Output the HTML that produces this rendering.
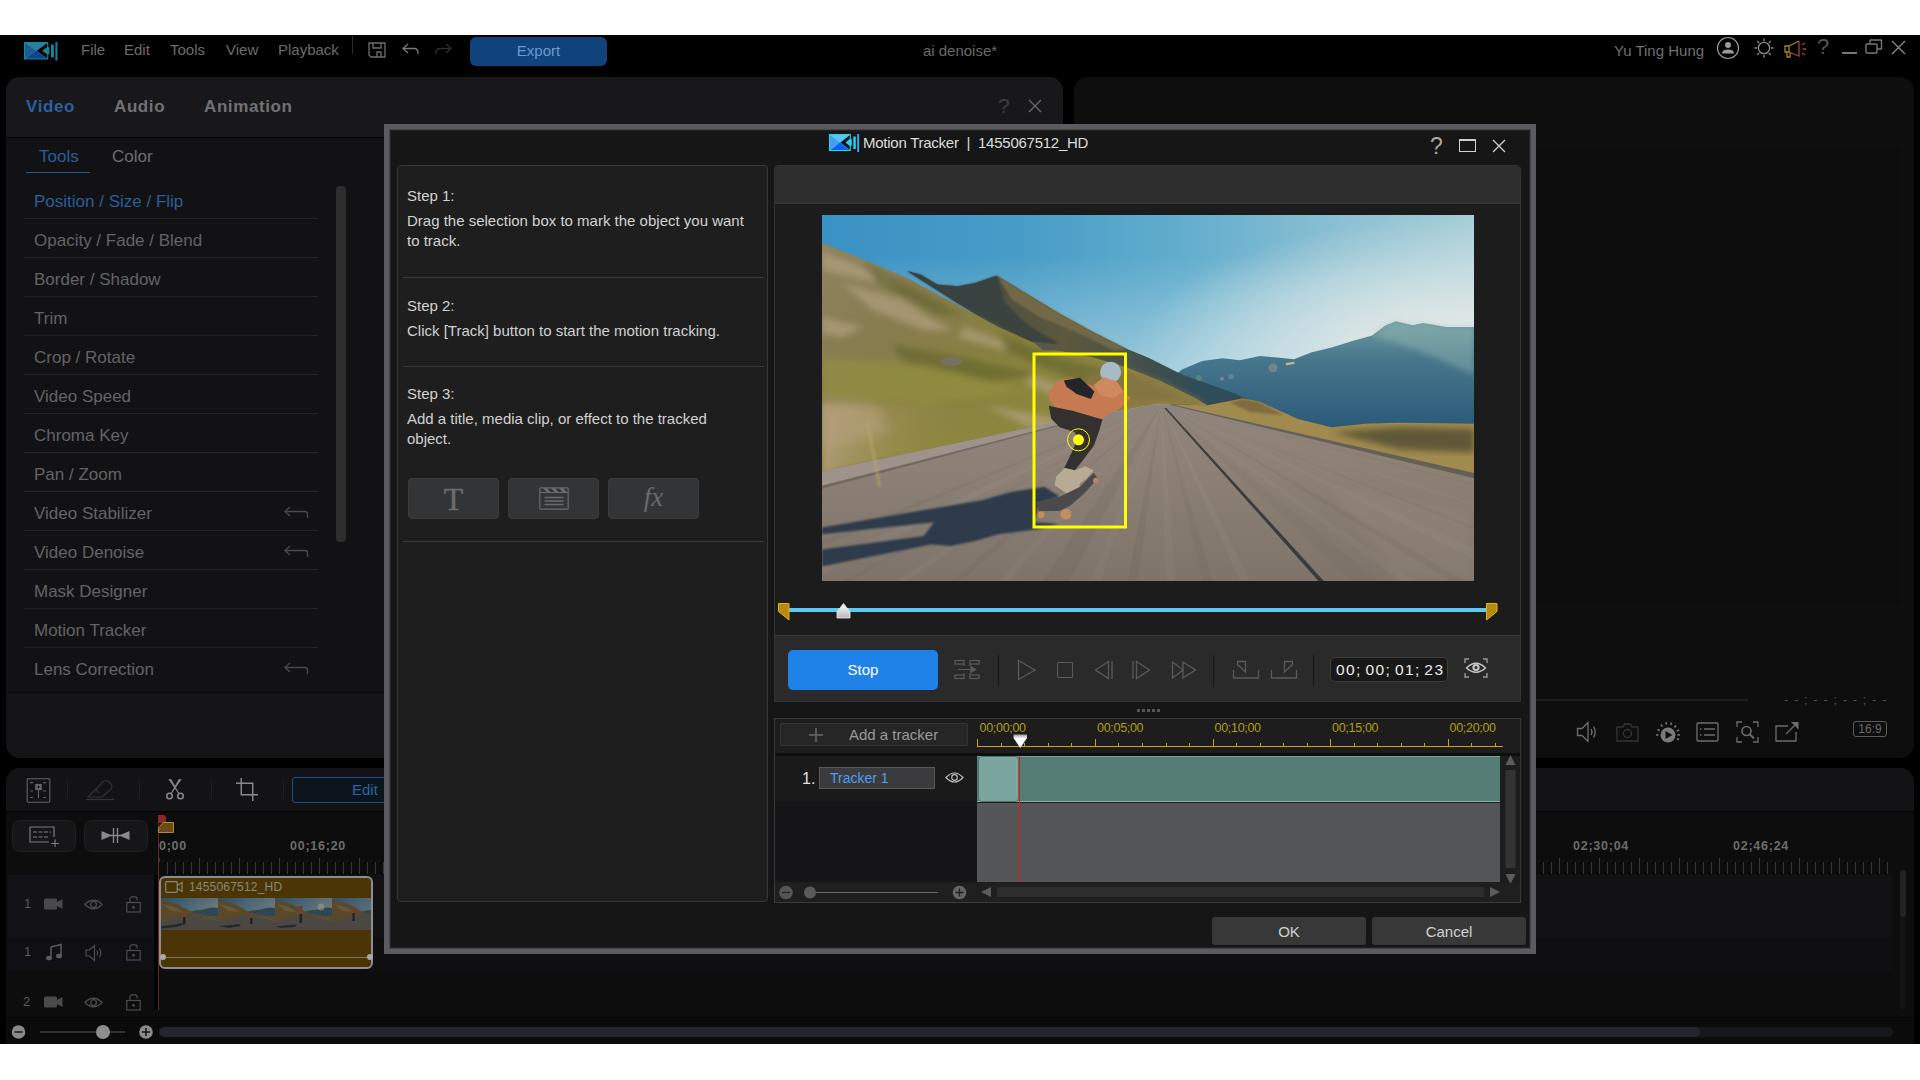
<!DOCTYPE html>
<html lang="en">
<head>
<meta charset="utf-8">
<title>Motion Tracker</title>
<style>
*{box-sizing:border-box;margin:0;padding:0}
html,body{width:1920px;height:1080px;overflow:hidden;background:#fff}
body{font-family:"Liberation Sans",sans-serif;color:#8a8a8a;position:relative}
.abs,.app *{position:absolute}
.app{position:absolute;left:0;top:0;width:1920px;height:1080px;background:linear-gradient(#fff 35px,#000 35px,#000 1044px,#fff 1044px);overflow:hidden}
svg{overflow:visible}
.t{white-space:nowrap;line-height:1}
/* top bar */
.menu{top:42px;font-size:15px;color:#6c6c6c}
/* panels */
.lp{left:6px;top:77px;width:1057px;height:681px;background:#121214;border-radius:14px;overflow:hidden}
.lph{left:0;top:0;width:100%;height:61px;background:#18181b;border-bottom:1px solid #050505}
.pv{left:1074px;top:77px;width:840px;height:681px;background:#0e0e0e;border-radius:14px}
.tl{left:6px;top:768px;width:1908px;height:276px;background:#0d0d0e;border-radius:14px 14px 0 0;overflow:hidden}
.tool{left:18px;width:294px;height:39px;border-bottom:1px solid #26262a;font-size:17px;color:#6e6e70}
.tool span{left:10px;top:11px}
/* dialog */
.dlg{left:384px;top:124px;width:1152px;height:830px;background:#161616;border:5px solid #5c5c60;box-shadow:inset 0 0 0 1px #454545,inset 0 0 0 2px #242424}
</style>
</head>
<body>
<div class="app">
<!--TOPBAR-->
<svg style="left:24px;top:41.500px" width="34.500" height="18.500" viewBox="0 0 31 18" preserveAspectRatio="none">
 <rect x="0" y="0" width="21.800" height="17" fill="#138a98"/>
 <path d="M1 1.500 L11 8.500 L1 15.500Z" fill="#215a92"/><path d="M1.500 1 H20.500 L11 8.500Z" fill="#2a7f9c"/><path d="M1.500 16 H20.500 L11 8.500Z" fill="#0f4390"/>
 <path d="M20.800 1.200 L11.500 8.500 L20.800 15.800 V12 L16.500 8.500 L20.800 5Z" fill="#000"/>
 <path d="M16.800 8.500 L21 5.200 H22.800 V11.800 H21Z" fill="#138a98"/>
 <rect x="24.300" y="2.500" width="2.500" height="12.500" fill="#138a98"/><rect x="28.200" y="0" width="1.900" height="18" fill="#1f7aa0"/>
</svg>
<div class="t menu" style="left:81px">File</div>
<div class="t menu" style="left:124px">Edit</div>
<div class="t menu" style="left:170px">Tools</div>
<div class="t menu" style="left:226px">View</div>
<div class="t menu" style="left:278px">Playback</div>
<div style="left:352px;top:36px;width:1px;height:18px;background:#2c2c2c"></div>
<svg style="left:368px;top:42px" width="18" height="16" viewBox="0 0 18 16" fill="none" stroke="#6f6f6f" stroke-width="1.3">
 <path d="M1 1 H17 V15 H3 L1 13Z"/><path d="M5 1 V6 H13 V1"/><path d="M9 15 V10 H13 V15"/>
</svg>
<svg style="left:402px;top:43px" width="17" height="12" viewBox="0 0 17 12" fill="none" stroke="#7a7a7a" stroke-width="1.3">
 <path d="M6 1 L1 5.5 L6 10"/><path d="M1 5.5 H12 Q16 5.5 16 10 V11"/>
</svg>
<svg style="left:435px;top:43px" width="17" height="12" viewBox="0 0 17 12" fill="none" stroke="#2e2e2e" stroke-width="1.3">
 <path d="M11 1 L16 5.5 L11 10"/><path d="M16 5.5 H5 Q1 5.5 1 10 V11"/>
</svg>
<div style="left:470px;top:37px;width:137px;height:29px;border-radius:6px;background:#10427c"></div>
<div class="t" style="left:470px;top:43px;width:137px;text-align:center;font-size:15px;color:#6c9bd0">Export</div>
<div class="t" style="left:860px;top:43px;width:200px;text-align:center;font-size:15px;color:#6a6a6a">ai denoise*</div>
<div class="t" style="left:1614px;top:43px;font-size:15px;color:#6f6f6f">Yu Ting Hung</div>
<svg style="left:1716px;top:36px" width="24" height="24" viewBox="0 0 24 24" fill="none" stroke="#9a9a9a" stroke-width="1.2">
 <circle cx="12" cy="12" r="10.5"/><circle cx="12" cy="9" r="3" fill="#9a9a9a" stroke="none"/><path d="M6 17.5 Q6 13.5 12 13.5 Q18 13.5 18 17.5 Z" fill="#9a9a9a" stroke="none"/>
</svg>
<svg style="left:1753px;top:37px" width="22" height="22" viewBox="0 0 22 22" fill="none" stroke="#8a8a8a" stroke-width="1.4">
 <circle cx="11" cy="11" r="5.6"/><path d="M11 1.5V4 M11 18V20.5 M1.5 11H4 M18 11H20.5 M4.3 4.3L6.1 6.1 M15.9 15.9L17.7 17.7 M4.3 17.7L6.1 15.9 M15.9 6.1L17.7 4.3"/>
</svg>
<svg style="left:1783px;top:39px" width="26" height="20" viewBox="0 0 26 20" fill="none" stroke-width="1.3">
 <path d="M2 7 H6 V13 H2 Z" stroke="#a8841a"/><path d="M6 7 L16 2" stroke="#a8841a"/><path d="M16 2 V17 L6 13" stroke="#a0452f"/><path d="M4 13 V18 H7 V13.5" stroke="#a8841a"/><path d="M19 6 L22 4 M19.5 10 H23 M19 14 L22 16" stroke="#a0452f"/>
</svg>
<div class="t" style="left:1817px;top:36px;font-size:22px;color:#555">?</div>
<div style="left:1842px;top:52px;width:15px;height:1.5px;background:#777"></div>
<svg style="left:1865px;top:39px" width="18" height="15" viewBox="0 0 18 15" fill="none" stroke="#777" stroke-width="1.4">
 <rect x="1" y="5" width="11" height="9" rx="1"/><path d="M5 5 V1.5 Q5 1 5.5 1 H16 Q16.5 1 16.500 1.5 V9.500 Q16.500 10 16 10 H12"/>
</svg>
<svg style="left:1891px;top:40px" width="15" height="15" viewBox="0 0 15 15" fill="none" stroke="#8a8a8a" stroke-width="1.3"><path d="M1 1 L14 14 M14 1 L1 14"/></svg>

<!--LEFTPANEL-->
<div class="lp">
 <div class="lph"></div>
 <div style="left:0;top:615px;width:100%;height:66px;background:#141416;border-top:1px solid #0c0c0d"></div>
</div>
<div class="t" style="left:26px;top:98px;font-size:17px;font-weight:bold;letter-spacing:.6px;color:#2b60a0">Video</div>
<div class="t" style="left:114px;top:98px;font-size:17px;font-weight:bold;letter-spacing:.6px;color:#727272">Audio</div>
<div class="t" style="left:204px;top:98px;font-size:17px;font-weight:bold;letter-spacing:.6px;color:#727272">Animation</div>
<div class="t" style="left:998px;top:95px;font-size:21px;color:#3f3f3f">?</div>
<svg style="left:1028px;top:99px" width="14" height="14" viewBox="0 0 14 14" fill="none" stroke="#6a6a6a" stroke-width="1.3"><path d="M1 1 L13 13 M13 1 L1 13"/></svg>
<div class="t" style="left:39px;top:148px;font-size:17px;color:#2a5d99">Tools</div>
<div style="left:26px;top:171.500px;width:64px;height:1.500px;background:#24558f"></div>
<div class="t" style="left:112px;top:148px;font-size:17px;color:#6e6e70">Color</div>
<div style="left:336px;top:186px;width:10px;height:356px;border-radius:4px;background:#2d2d2e"></div>
<div class="t" style="left:34px;top:193px;font-size:17px;color:#2a5d99">Position / Size / Flip</div>
<div style="left:24px;top:218px;width:294px;height:1px;background:#252528"></div>
<div class="t" style="left:34px;top:232px;font-size:17px;color:#636365">Opacity / Fade / Blend</div>
<div style="left:24px;top:257px;width:294px;height:1px;background:#252528"></div>
<div class="t" style="left:34px;top:271px;font-size:17px;color:#636365">Border / Shadow</div>
<div style="left:24px;top:296px;width:294px;height:1px;background:#252528"></div>
<div class="t" style="left:34px;top:310px;font-size:17px;color:#636365">Trim</div>
<div style="left:24px;top:335px;width:294px;height:1px;background:#252528"></div>
<div class="t" style="left:34px;top:349px;font-size:17px;color:#636365">Crop / Rotate</div>
<div style="left:24px;top:374px;width:294px;height:1px;background:#252528"></div>
<div class="t" style="left:34px;top:388px;font-size:17px;color:#636365">Video Speed</div>
<div style="left:24px;top:413px;width:294px;height:1px;background:#252528"></div>
<div class="t" style="left:34px;top:427px;font-size:17px;color:#636365">Chroma Key</div>
<div style="left:24px;top:452px;width:294px;height:1px;background:#252528"></div>
<div class="t" style="left:34px;top:466px;font-size:17px;color:#636365">Pan / Zoom</div>
<div style="left:24px;top:491px;width:294px;height:1px;background:#252528"></div>
<div class="t" style="left:34px;top:505px;font-size:17px;color:#636365">Video Stabilizer</div>
<div style="left:24px;top:530px;width:294px;height:1px;background:#252528"></div>
<svg style="left:284px;top:506px" width="25" height="13" viewBox="0 0 25 13" fill="none" stroke="#4a4a4c" stroke-width="1.3"><path d="M6 1 L1 5.5 L6 10"/><path d="M1 5.5 H21 Q23.5 5.5 23.5 8 V12"/></svg>
<div class="t" style="left:34px;top:544px;font-size:17px;color:#636365">Video Denoise</div>
<div style="left:24px;top:569px;width:294px;height:1px;background:#252528"></div>
<svg style="left:284px;top:545px" width="25" height="13" viewBox="0 0 25 13" fill="none" stroke="#4a4a4c" stroke-width="1.3"><path d="M6 1 L1 5.5 L6 10"/><path d="M1 5.5 H21 Q23.5 5.5 23.5 8 V12"/></svg>
<div class="t" style="left:34px;top:583px;font-size:17px;color:#636365">Mask Designer</div>
<div style="left:24px;top:608px;width:294px;height:1px;background:#252528"></div>
<div class="t" style="left:34px;top:622px;font-size:17px;color:#636365">Motion Tracker</div>
<div style="left:24px;top:647px;width:294px;height:1px;background:#252528"></div>
<div class="t" style="left:34px;top:661px;font-size:17px;color:#636365">Lens Correction</div>
<svg style="left:284px;top:662px" width="25" height="13" viewBox="0 0 25 13" fill="none" stroke="#4a4a4c" stroke-width="1.3"><path d="M6 1 L1 5.5 L6 10"/><path d="M1 5.5 H21 Q23.5 5.5 23.5 8 V12"/></svg>

<!--PREVIEW-->
<div class="pv"></div>
<div style="left:1084px;top:147px;width:816px;height:457px;background:#0c0c0c"></div>
<div style="left:1536px;top:699px;width:212px;height:2px;background:#1f1f1f"></div>
<div class="t" style="left:1784px;top:693px;font-size:13px;color:#4e4e4e;letter-spacing:5.700px">--;--;--;--</div>
<svg style="left:1576px;top:721px" width="22" height="22" viewBox="0 0 22 22" fill="none" stroke="#6e6e6e" stroke-width="1.300"><path d="M1.500 7.500 H6 L12 1.500 V20.500 L6 14.500 H1.500Z"/><path d="M15 8 Q17 11 15 14 M17.500 5.500 Q21 11 17.500 16.500"/></svg>
<svg style="left:1616px;top:723px" width="23" height="19" viewBox="0 0 23 19" fill="none" stroke="#353535" stroke-width="1.300"><path d="M1 4 H7 L8.500 1 H14.500 L16 4 H22 V18 H1Z"/><circle cx="11.500" cy="10.500" r="4"/></svg>
<svg style="left:1653px;top:719px" width="30" height="26" viewBox="0 0 30 26"><circle cx="15" cy="16" r="7.500" fill="#7a7a7a"/><path d="M12.500 12 L19.500 16 L12.500 20Z" fill="#0e0e0e"/><path d="M3 16 H5.500 M4.500 10.500 L6.800 11.700 M8 5.500 L9.500 7.600 M13 3 L13.500 5.500 M18.500 3.500 L17.800 6 M23 6.500 L21.500 8.500 M26 11 L23.800 12.200 M27 16 H24.500 M26 20.500 L23.800 19.700" stroke="#7a7a7a" stroke-width="1.500" fill="none"/></svg>
<svg style="left:1696px;top:722px" width="23" height="20" viewBox="0 0 23 20" fill="none" stroke="#6e6e6e" stroke-width="1.300"><rect x="1" y="1" width="21" height="18" rx="1"/><path d="M8 7 H19 M8 13 H19 M4 7 H5.500 M4 13 H5.500"/></svg>
<svg style="left:1736px;top:721px" width="23" height="22" viewBox="0 0 23 22" fill="none" stroke="#6e6e6e" stroke-width="1.300"><path d="M1 6 V1 H6 M17 1 H22 V6 M22 16 V21 H17 M6 21 H1 V16"/><circle cx="10.500" cy="10" r="4.500" stroke-width="1.600"/><path d="M14 13.500 L18 17.500" stroke-width="1.800"/></svg>
<svg style="left:1775px;top:721px" width="25" height="21" viewBox="0 0 25 21" fill="none" stroke="#6e6e6e" stroke-width="1.300"><path d="M13 5 H1 V20 H21 V11"/><path d="M11 13 L22 2"/><path d="M16 1 H23.500 V8.500Z" fill="#6e6e6e" stroke="none"/></svg>
<div style="left:1853px;top:721px;width:34px;height:16px;border:1.300px solid #5a5a5a;border-radius:3px"></div>
<div class="t" style="left:1853px;top:723px;width:34px;text-align:center;font-size:12px;color:#6a6a6a">16:9</div>

<!--TIMELINE-->
<div class="tl"><div style="left:0;top:0;width:100%;height:44px;background:#131315;border-bottom:1px solid #050505"></div>
<div style="left:2px;top:107px;width:146px;height:62px;background:#131317"></div>
<div style="left:2px;top:169px;width:146px;height:34px;background:#101014"></div>
<div style="left:148px;top:107px;width:5px;height:135px;background:#050505"></div>
<div style="left:153px;top:107px;width:1733px;height:62px;background:#121215"></div>
<div style="left:153px;top:169px;width:1733px;height:34px;background:#0f0f12"></div>
<div style="left:0;top:249px;width:100%;height:27px;background:#0b0b0c;border-top:1px solid #050505"></div>
</div>
<svg style="left:26px;top:778px" width="25" height="25" viewBox="0 0 26 27" fill="none" stroke="#636363" stroke-width="1.200"><rect x="0.800" y="0.800" width="24.400" height="25.400" rx="1"/><path d="M4 5 H8 M18 5 H22 M4 14 H8 M18 14 H22 M4 21 H8 M18 21 H22" stroke-dasharray="3 1"/><rect x="10" y="7" width="6" height="5.500" fill="#636363"/><rect x="12" y="8.800" width="2" height="2" fill="#131315" stroke="none"/><path d="M13 13 V22"/></svg>
<div style="left:67px;top:781px;width:1px;height:18px;background:#222"></div>
<svg style="left:85px;top:779px" width="30" height="22" viewBox="0 0 30 22" fill="none" stroke="#333" stroke-width="1.200"><path d="M3 18 L18 3 Q21 0.500 24 3 L26 5 Q28 8 25.500 10.500 L17 18 Z"/><path d="M1 20.500 H29"/><path d="M11 10 L14 14"/></svg>
<div style="left:139px;top:781px;width:1px;height:18px;background:#222"></div>
<svg style="left:165px;top:779px" width="20" height="21" viewBox="0 0 20 21" fill="none" stroke="#8a8a8a" stroke-width="1.500"><path d="M4 0.500 L6 0.500 L13.800 14.500 Z M16 0.500 L14 0.500 L6.200 14.500Z" fill="#8a8a8a" stroke-width=".8"/><circle cx="4.500" cy="17" r="2.800"/><circle cx="15.500" cy="17" r="2.800"/></svg>
<div style="left:211px;top:781px;width:1px;height:18px;background:#222"></div>
<svg style="left:236px;top:778px" width="22" height="23" viewBox="0 0 23 24" fill="none" stroke="#8a8a8a" stroke-width="1.500"><path d="M5.500 0 V17.500 H23 M0 5.500 H17.500 V24"/></svg>
<div style="left:283px;top:781px;width:1px;height:18px;background:#222"></div>
<div style="left:292px;top:777px;width:120px;height:26px;background:#0c141d;border:1.500px solid #1b4f85;border-radius:3px"></div>
<div class="t" style="left:352px;top:781.500px;font-size:15px;color:#2a64a4">Edit</div>
<div style="left:12px;top:820px;width:64px;height:32px;background:#161618;border:1px solid #202022;border-radius:8px"></div>
<div style="left:84px;top:820px;width:64px;height:32px;background:#161618;border:1px solid #202022;border-radius:8px"></div>
<svg style="left:29px;top:826px" width="32" height="21" viewBox="0 0 32 21" fill="none" stroke="#7c7c7c" stroke-width="1.200"><path d="M25 11 V1 H1 V16 H20"/><path d="M4 6 H22 M4 11 H20" stroke-dasharray="4 1.500"/><path d="M22 17.500 H30 M26 13.500 V21"/></svg>
<svg style="left:101px;top:827px" width="29" height="17" viewBox="0 0 29 17"><path d="M0.500 4 L11 8.500 L0.500 13Z M28.500 4 L18 8.500 L28.500 13Z" fill="#8a8a8a"/><path d="M12.500 1 V16 M16.500 1 V16 M9 8.500 H20" stroke="#8a8a8a" stroke-width="1.300"/></svg>
<div style="left:158px;top:816px;width:1px;height:194px;background:#6e2124"></div>
<svg style="left:158px;top:815px" width="18" height="19" viewBox="0 0 18 19"><path d="M0 0 H5 Q8 0 8 3 V8 H0Z" fill="#8a262a"/><path d="M5 7.500 H15.500 V17.500 H0.500 V13Z" fill="#6a4a18" stroke="#b08a30" stroke-width="1"/></svg>
<div class="t" style="left:159px;top:840px;font-size:12.500px;font-weight:bold;letter-spacing:.75px;color:#6c6c6c">0;00</div>
<div class="t" style="left:290px;top:840px;font-size:12.500px;font-weight:bold;letter-spacing:.75px;color:#6c6c6c">00;16;20</div>
<div class="t" style="left:1573px;top:840px;font-size:12.500px;font-weight:bold;letter-spacing:.75px;color:#6c6c6c">02;30;04</div>
<div class="t" style="left:1733px;top:840px;font-size:12.500px;font-weight:bold;letter-spacing:.75px;color:#6c6c6c">02;46;24</div>
<div style="left:166.500px;top:862px;width:1726px;height:12px;background:repeating-linear-gradient(90deg,#36363a 0 1px,transparent 1px 8px)"></div>
<div style="left:158.500px;top:858px;width:1734px;height:4px;background:repeating-linear-gradient(90deg,#36363a 0 1px,transparent 1px 40px)"></div>
<div class="t" style="left:24px;top:897px;font-size:13px;color:#5a5a5a">1</div>
<svg style="left:44px;top:898px" width="19" height="12" viewBox="0 0 19 12"><rect x="0" y="0.5" width="13" height="11" rx="1.500" fill="#4a4a4a"/><path d="M13 4 L18.500 1 V11 L13 8Z" fill="#4a4a4a"/></svg>
<svg style="left:84px;top:898px" width="19" height="13" viewBox="0 0 19 13" fill="none" stroke="#4c4c4c" stroke-width="1.200"><path d="M0.800 6.500 Q9.500 -2 18.200 6.500 Q9.500 15 0.800 6.500Z"/><circle cx="9.500" cy="6.500" r="2.900"/></svg>
<svg style="left:126px;top:896px" width="15" height="18" viewBox="0 0 15 18" fill="none" stroke="#4c4c4c" stroke-width="1.200"><rect x="0.800" y="6.500" width="13.400" height="9.500"/><path d="M4 6.500 V3 Q4 0.800 6.200 0.800 H9 Q11.200 0.800 11.200 3 V4.500"/><circle cx="7.500" cy="11.300" r="1.400" fill="#4c4c4c" stroke="none"/></svg>

<div class="t" style="left:24px;top:945px;font-size:13px;color:#5a5a5a">1</div>
<svg style="left:46px;top:944px" width="16" height="17" viewBox="0 0 16 17"><path d="M5 3 L15 0.500 V12 M5 3 V14" stroke="#5a5a5a" stroke-width="1.500" fill="none"/><ellipse cx="3" cy="14" rx="3" ry="2.300" fill="#5a5a5a"/><ellipse cx="13" cy="12" rx="3" ry="2.300" fill="#5a5a5a"/></svg>
<svg style="left:85px;top:944px" width="18" height="18" viewBox="0 0 18 18" fill="none" stroke="#4c4c4c" stroke-width="1.200"><path d="M1 6 H4.500 L9.500 1.500 V16.500 L4.500 12 H1Z"/><path d="M12 6.500 Q13.500 9 12 11.500 M14.500 4.500 Q17 9 14.500 13.500"/></svg>
<svg style="left:126px;top:944px" width="15" height="18" viewBox="0 0 15 18" fill="none" stroke="#4c4c4c" stroke-width="1.200"><rect x="0.800" y="6.500" width="13.400" height="9.500"/><path d="M4 6.500 V3 Q4 0.800 6.200 0.800 H9 Q11.200 0.800 11.200 3 V4.500"/><circle cx="7.500" cy="11.300" r="1.400" fill="#4c4c4c" stroke="none"/></svg>

<div class="t" style="left:23px;top:995px;font-size:13px;color:#5a5a5a">2</div>
<svg style="left:44px;top:996px" width="19" height="12" viewBox="0 0 19 12"><rect x="0" y="0.5" width="13" height="11" rx="1.500" fill="#4a4a4a"/><path d="M13 4 L18.500 1 V11 L13 8Z" fill="#4a4a4a"/></svg>
<svg style="left:84px;top:996px" width="19" height="13" viewBox="0 0 19 13" fill="none" stroke="#4c4c4c" stroke-width="1.200"><path d="M0.800 6.500 Q9.500 -2 18.200 6.500 Q9.500 15 0.800 6.500Z"/><circle cx="9.500" cy="6.500" r="2.900"/></svg>
<svg style="left:126px;top:994px" width="15" height="18" viewBox="0 0 15 18" fill="none" stroke="#4c4c4c" stroke-width="1.200"><rect x="0.800" y="6.500" width="13.400" height="9.500"/><path d="M4 6.500 V3 Q4 0.800 6.200 0.800 H9 Q11.200 0.800 11.200 3 V4.500"/><circle cx="7.500" cy="11.300" r="1.400" fill="#4c4c4c" stroke="none"/></svg>

<!-- clip -->
<div style="left:159px;top:876px;width:214px;height:93px;background:#4b3506;border:2px solid #8e8e8e;border-radius:6px"></div>
<svg style="left:165px;top:881px" width="18" height="12" viewBox="0 0 18 12" fill="none" stroke="#8a8574" stroke-width="1.200"><rect x="0.700" y="0.700" width="11.500" height="10.600" rx="1"/><path d="M12.200 4.500 L17 1.500 V10.500 L12.200 7.500"/></svg>
<div class="t" style="left:189px;top:881px;font-size:12px;color:#8a8678;letter-spacing:.2px">1455067512_HD</div>
<svg style="left:161px;top:898px;overflow:hidden" width="210" height="32" viewBox="0 0 210 32">
<defs><linearGradient id="tsky" x1="0" y1="0" x2="1" y2="0.600"><stop offset="0" stop-color="#2f6386"/><stop offset="1" stop-color="#8f9c9c"/></linearGradient>
</defs>
<g transform="translate(0 0)"><rect width="57" height="32" fill="url(#tsky)"/><path d="M28 14 L34 12.500 L40 12 L48 10 L53 9.500 L57 10 V19 H28Z" fill="#35566a"/><path d="M0 1 L8 3.500 L16 6 L24 10 L31 14.500 L37 17 L0 23Z" fill="#6b5833"/><path d="M2 6 L14 9 L22 14 L10 13Z" fill="#8a7650" opacity=".6"/><path d="M0 23 L20 18.500 L30 16.500 L57 22.500 V32 H0Z" fill="#5a5654"/><path d="M30 16.500 L38 16 L48 18 L57 18 V22.500Z" fill="#6a5a36"/></g><g transform="translate(57 0)"><rect width="57" height="32" fill="url(#tsky)"/><path d="M28 14 L34 12.500 L40 12 L48 10 L53 9.500 L57 10 V19 H28Z" fill="#35566a"/><path d="M0 1 L8 3.500 L16 6 L24 10 L31 14.500 L37 17 L0 23Z" fill="#6b5833"/><path d="M2 6 L14 9 L22 14 L10 13Z" fill="#8a7650" opacity=".6"/><path d="M0 23 L20 18.500 L30 16.500 L57 22.500 V32 H0Z" fill="#5a5654"/><path d="M30 16.500 L38 16 L48 18 L57 18 V22.500Z" fill="#6a5a36"/></g><g transform="translate(114 0)"><rect width="57" height="32" fill="url(#tsky)"/><path d="M28 14 L34 12.500 L40 12 L48 10 L53 9.500 L57 10 V19 H28Z" fill="#35566a"/><path d="M0 1 L8 3.500 L16 6 L24 10 L31 14.500 L37 17 L0 23Z" fill="#6b5833"/><path d="M2 6 L14 9 L22 14 L10 13Z" fill="#8a7650" opacity=".6"/><path d="M0 23 L20 18.500 L30 16.500 L57 22.500 V32 H0Z" fill="#5a5654"/><path d="M30 16.500 L38 16 L48 18 L57 18 V22.500Z" fill="#6a5a36"/></g><g transform="translate(171 0)"><rect width="57" height="32" fill="url(#tsky)"/><path d="M28 14 L34 12.500 L40 12 L48 10 L53 9.500 L57 10 V19 H28Z" fill="#35566a"/><path d="M0 1 L8 3.500 L16 6 L24 10 L31 14.500 L37 17 L0 23Z" fill="#6b5833"/><path d="M2 6 L14 9 L22 14 L10 13Z" fill="#8a7650" opacity=".6"/><path d="M0 23 L20 18.500 L30 16.500 L57 22.500 V32 H0Z" fill="#5a5654"/><path d="M30 16.500 L38 16 L48 18 L57 18 V22.500Z" fill="#6a5a36"/></g>
<path d="M0 28 L14 26.500 L20 25 L24 26 L16 29 L0 30.500Z M57 28 L70 27 L78 26 L80 28 L68 30Z M114 28.500 L128 27 L136 26.500 L134 29 L120 30Z" fill="#2a2f3a"/>
<g fill="#8a4e34"><rect x="21" y="14" width="4" height="5"/><rect x="88" y="15" width="4" height="5"/><rect x="137" y="8" width="4.500" height="8"/><rect x="190" y="8" width="4" height="7"/></g>
<g fill="#25262a"><rect x="22" y="19" width="2.500" height="7"/><rect x="89" y="20" width="2.500" height="6"/><rect x="138.500" y="16" width="2.500" height="9"/><rect x="191.500" y="15" width="2.200" height="8"/></g>
<circle cx="160" cy="9" r="3.500" fill="#c8c4b4" opacity=".55"/><rect width="210" height="32" fill="#1a1408" opacity=".22"/>
</svg>

<div style="left:162px;top:957px;width:208px;height:1px;background:#7d755f"></div>
<div style="left:160px;top:954px;width:6px;height:6px;border-radius:3px;background:#a8a8a8"></div>
<div style="left:367px;top:954px;width:6px;height:6px;border-radius:3px;background:#a8a8a8"></div>
<!-- bottom bar -->
<svg style="left:10px;top:1024px" width="146" height="16" viewBox="0 0 146 16"><circle cx="8.500" cy="8" r="6.800" fill="#8a8a8a"/><path d="M4.500 8 H12.500" stroke="#111" stroke-width="1.400"/><path d="M30 8 H115" stroke="#5a5a5a" stroke-width="1"/><circle cx="93" cy="8" r="7" fill="#8e8e8e"/><circle cx="136" cy="8" r="6.800" fill="#8a8a8a"/><path d="M132 8 H140 M136 4 V12" stroke="#111" stroke-width="1.400"/></svg>
<div style="left:159px;top:1027px;width:1734px;height:10px;border-radius:5px;background:#17181b"></div>
<div style="left:159px;top:1027px;width:1541px;height:10px;border-radius:5px;background:#23252b"></div>
<div style="left:1900px;top:870px;width:6px;height:140px;border-radius:3px;background:#131314"></div>
<div style="left:1900px;top:870px;width:6px;height:47px;border-radius:3px;background:#222224"></div>

<!--DIALOG-->
<div class="dlg"></div>
<svg style="left:829px;top:134px" width="31" height="18" viewBox="0 0 31 18">
 <rect x="0" y="0" width="21.800" height="17" fill="#22d2ee"/>
 <path d="M1 1.500 L11 8.500 L1 15.500Z" fill="#4a9af0"/><path d="M1.500 1 H20.500 L11 8.500Z" fill="#5cc4f2"/><path d="M1.500 16 H20.500 L11 8.500Z" fill="#0a62ee"/>
 <path d="M20.800 1.200 L11.500 8.500 L20.800 15.800 V12 L16.500 8.500 L20.800 5Z" fill="#141414"/>
 <path d="M16.800 8.500 L21 5.200 H22.800 V11.800 H21Z" fill="#22d2ee"/>
 <rect x="24.300" y="2.500" width="2.500" height="12.500" fill="#22d2ee"/><rect x="28.200" y="0" width="1.900" height="18" fill="#2aaef0"/>
</svg>
<div class="t" style="left:863px;top:135px;font-size:15px;color:#dcdcdc;letter-spacing:-.25px">Motion Tracker&nbsp; |&nbsp; 1455067512_HD</div>
<div class="t" style="left:1430px;top:134.500px;font-size:23px;color:#aaa6a0">?</div>
<div style="left:1459px;top:139px;width:17px;height:13px;border:1.500px solid #d0d0d0;border-top-width:2px"></div>
<svg style="left:1492px;top:139px" width="14" height="14" viewBox="0 0 14 14" fill="none" stroke="#cfcfcf" stroke-width="1.300"><path d="M1 1 L13 13 M13 1 L1 13"/></svg>
<!-- steps panel -->
<div style="left:397px;top:165px;width:371px;height:737px;background:#1e1e1e;border:1px solid #383838;border-radius:4px"></div>
<div class="t" style="left:407px;top:188px;color:#d2d2d2;font-size:15px">Step 1:</div>
<div class="t" style="left:407px;top:213px;color:#d2d2d2;font-size:15px">Drag the selection box to mark the object you want</div>
<div class="t" style="left:407px;top:233px;color:#d2d2d2;font-size:15px">to track.</div>
<div style="left:403px;top:277px;width:361px;height:1px;background:#3a3a3a"></div>
<div class="t" style="left:407px;top:298px;color:#d2d2d2;font-size:15px">Step 2:</div>
<div class="t" style="left:407px;top:323px;color:#d2d2d2;font-size:15px">Click [Track] button to start the motion tracking.</div>
<div style="left:403px;top:366px;width:361px;height:1px;background:#3a3a3a"></div>
<div class="t" style="left:407px;top:386px;color:#d2d2d2;font-size:15px">Step 3:</div>
<div class="t" style="left:407px;top:411px;color:#d2d2d2;font-size:15px">Add a title, media clip, or effect to the tracked</div>
<div class="t" style="left:407px;top:431px;color:#d2d2d2;font-size:15px">object.</div>
<div style="left:408px;top:478px;width:91px;height:41px;background:#333436;border:1px solid #3b3c3e;border-radius:4px"></div>
<div style="left:508px;top:478px;width:91px;height:41px;background:#333436;border:1px solid #3b3c3e;border-radius:4px"></div>
<div style="left:608px;top:478px;width:91px;height:41px;background:#333436;border:1px solid #3b3c3e;border-radius:4px"></div>
<div class="t" style="left:408px;top:483px;width:91px;text-align:center;font-family:'Liberation Serif',serif;font-size:32px;color:#6c6c6c;-webkit-text-stroke:.4px #6c6c6c">T</div>
<svg style="left:539px;top:487px" width="30" height="23" viewBox="0 0 30 23" fill="none" stroke="#6a6a6a" stroke-width="1.200">
 <rect x="0.800" y="0.800" width="28.400" height="21.400" rx="1"/><path d="M0.800 5.500 H29.200"/><path d="M4 1 L8 5.500 H12 L8 1Z M12 1 L16 5.500 H20 L16 1Z M20 1 L24 5.500 H28 L24 1Z" fill="#6a6a6a" stroke="none"/><path d="M5.500 10.500 H24.500 M5.500 14 H24.500 M5.500 17.500 H24.500" stroke-width="1.400"/>
</svg>
<div class="t" style="left:608px;top:482px;width:91px;text-align:center;font-family:'Liberation Serif',serif;font-style:italic;font-size:27px;color:#6a6a6a;padding-top:2px">fx</div>
<div style="left:403px;top:541px;width:361px;height:1px;background:#3a3a3a"></div>
<!-- viewer panel -->
<div style="left:774px;top:165px;width:747px;height:537px;background:#1c1c1c;border:1px solid #333;border-radius:4px 4px 0 0"></div>
<div style="left:775px;top:166px;width:745px;height:38px;background:#2d2d2d;border-bottom:1px solid #3a3a3a;border-radius:4px 4px 0 0"></div>
<div style="left:775px;top:635px;width:745px;height:66px;background:#2a2a2a;border-top:1px solid #3a3a3a"></div>
<svg style="left:822px;top:215px;overflow:hidden" width="652" height="366" viewBox="0 0 652 366">
<defs>
 <linearGradient id="sky" x1="0" y1="0" x2="1" y2="0"><stop offset="0" stop-color="#3a91c4"/><stop offset="0.30" stop-color="#479cc7"/><stop offset="0.55" stop-color="#62adcd"/><stop offset="0.8" stop-color="#8cc0d2"/><stop offset="1" stop-color="#a6cdd7"/></linearGradient>
 <radialGradient id="glow" gradientUnits="userSpaceOnUse" cx="640" cy="140" r="330" gradientTransform="translate(640 140) scale(1 .42) translate(-640 -140)"><stop offset="0" stop-color="#e9e8e3" stop-opacity="1"/><stop offset="0.3" stop-color="#e4e7e4" stop-opacity=".9"/><stop offset="0.65" stop-color="#dce7e8" stop-opacity=".5"/><stop offset="1" stop-color="#dce7e8" stop-opacity="0"/></radialGradient>
 <linearGradient id="haze" x1="0" y1="0" x2="0" y2="1"><stop offset="0" stop-color="#d8e8ea" stop-opacity="0"/><stop offset="1" stop-color="#d8e8ea" stop-opacity=".7"/></linearGradient>
 <linearGradient id="hill" gradientUnits="userSpaceOnUse" x1="0" y1="80" x2="500" y2="760"><stop offset="0" stop-color="#8f8460"/><stop offset="0.35" stop-color="#877c50"/><stop offset="0.65" stop-color="#878040"/><stop offset="1" stop-color="#8d883e"/></linearGradient>
 <linearGradient id="mtn" gradientUnits="userSpaceOnUse" x1="250" y1="200" x2="1100" y2="500"><stop offset="0" stop-color="#3c4846"/><stop offset="0.3" stop-color="#4f5140"/><stop offset="0.55" stop-color="#5d583e"/><stop offset="0.8" stop-color="#45504a"/><stop offset="1" stop-color="#2f4c58"/></linearGradient>
 <linearGradient id="far" gradientUnits="userSpaceOnUse" x1="0" y1="320" x2="0" y2="620"><stop offset="0" stop-color="#6a989e"/><stop offset="0.35" stop-color="#47778c"/><stop offset="1" stop-color="#2b5b79"/></linearGradient>
 <linearGradient id="road" gradientUnits="userSpaceOnUse" x1="0" y1="556" x2="0" y2="1078"><stop offset="0" stop-color="#90857c"/><stop offset="0.35" stop-color="#8d8176"/><stop offset="1" stop-color="#7e746b"/></linearGradient>
 <linearGradient id="sand" gradientUnits="userSpaceOnUse" x1="0" y1="0" x2="520" y2="0"><stop offset="0" stop-color="#b39f7c" stop-opacity=".85"/><stop offset="0.5" stop-color="#a39456" stop-opacity=".35"/><stop offset="1" stop-color="#8f8a3f" stop-opacity="0"/></linearGradient>
 <clipPath id="roadclip"><path d="M0 806 L700 620 L990 556 L1030 560 L1920 775 V1078 H0Z"/></clipPath>
 <filter id="b1"><feGaussianBlur stdDeviation="3"/></filter>
 <filter id="b3"><feGaussianBlur stdDeviation="9"/></filter>
 <filter id="b6"><feGaussianBlur stdDeviation="18"/></filter>
</defs>
<rect width="652" height="366" fill="url(#sky)"/>
<rect width="652" height="366" fill="url(#glow)"/>
<rect x="0" y="40" width="652" height="160" fill="url(#haze)"/>
<g transform="scale(0.33958)">
 <!-- far blue mountains -->
 <path d="M1030 480 L1060 455 L1120 430 L1180 422 L1230 428 L1290 415 L1340 420 L1390 425 L1440 405 L1500 390 L1560 372 L1620 355 L1660 325 L1690 313 L1740 325 L1770 318 L1840 330 L1920 330 V660 H1030Z" fill="url(#far)"/>
 <path d="M1620 355 L1660 325 L1690 313 L1740 325 L1770 318 L1840 330 L1920 330 V470 L1760 400Z" fill="#9fbfb6" opacity=".4" filter="url(#b3)"/>
 <!-- dark mid mountain -->
 <path d="M250 165 L290 175 L340 205 L400 210 L450 200 L515 178 L600 230 L700 290 L800 345 L900 395 L960 420 L1060 470 L1200 520 L1300 560 L1400 600 L1130 600 L620 400Z" fill="url(#mtn)"/>
 <path d="M515 178 L600 230 L700 290 L800 345 L900 395 L860 400 L760 350 L640 300 L560 250Z" fill="#7a6e48" opacity=".8" filter="url(#b1)"/>
 <path d="M250 165 L290 175 L340 205 L400 210 L450 200 L515 178 L540 260 L600 320 L700 380 L620 378 L400 262Z" fill="#34413f" opacity=".8" filter="url(#b1)"/>
 <!-- sunlit front hill + grass -->
 <path d="M0 82 L120 130 L250 185 L400 265 L520 330 L620 375 L700 400 L800 420 L900 450 L1000 490 L1100 540 L1135 560 L990 556 L690 610 L0 760Z" fill="url(#hill)"/>
 <g filter="url(#b3)">
  <path d="M60 200 L240 250 L330 310 L390 340 L300 340 L150 280Z M420 330 L560 380 L540 400 L400 360Z M0 300 L120 330 L60 360 L0 350Z M620 470 L800 540 L760 560 L600 500Z M0 110 L110 150 L230 215 L120 190 L0 160Z M480 560 L700 600 L780 660 L640 640Z" fill="#b3a382" opacity=".65"/>
  <path d="M120 140 L300 230 L420 300 L330 290 L160 200Z M520 350 L700 420 L900 470 L1050 540 L900 540 L700 470 L540 400Z M200 380 L420 420 L640 470 L500 490 L250 440Z" fill="#5f5e2c" opacity=".55"/>
  <path d="M0 420 L300 440 L600 520 L300 560 L0 540Z" fill="#98933c" opacity=".5"/>
 </g>
 <path d="M860 440 L1000 490 L1100 540 L1135 560 L990 556 L880 574 L760 540 L780 470Z" fill="#8a7446" opacity=".75" filter="url(#b3)"/>
 <path d="M0 560 L520 560 L690 610 L0 760Z" fill="url(#sand)" filter="url(#b3)"/>
 <path d="M0 540 L160 560 L200 640 L0 700Z" fill="#b6a07e" opacity=".6" filter="url(#b6)"/>
 <ellipse cx="380" cy="432" rx="32" ry="13" fill="#77715f"/>
 <path d="M620 372 L680 380 L720 400 L650 398Z" fill="#5a564a"/>
 <!-- right golden hill -->
 <path d="M1135 560 L1200 548 L1240 540 L1290 550 L1400 600 L1500 625 L1600 615 L1700 612 L1920 615 V765 L1030 558Z" fill="#a08a4e"/>
 <path d="M1500 640 L1700 625 L1920 630 V700 L1700 690Z" fill="#4c4a30" opacity=".75" filter="url(#b3)"/>
 <path d="M1200 552 L1240 542 L1290 552 L1360 590 L1260 580Z" fill="#6a5a38" opacity=".6" filter="url(#b1)"/>
 <!-- road -->
 <path d="M0 755 L690 610 L990 556 L1030 558 L1920 760 V1078 H0Z" fill="url(#road)"/>
 <path d="M1030 558 L1920 760 V775 L1030 560Z" fill="#5e5a50" opacity=".85"/>
 <path d="M1008 568 L1014 568 L1478 1078 L1462 1078Z" fill="#3c3b3b"/>
 <path d="M0 755 L690 610 L700 617 L0 797Z" fill="#9e928b"/>
 <path d="M0 797 L700 617 L702 620 L0 806Z" fill="#66605a" opacity=".7"/>
 <path d="M1500 800 L1920 880 V1078 H1700Z" fill="#978a7c" opacity=".35" filter="url(#b6)"/>
 <g clip-path="url(#roadclip)"><path d="M1000 557 L-300 1078 L-240 1078Z" fill="#000" opacity="0.030"/><path d="M1000 557 L-120 1078 L-40 1078Z" fill="#fff" opacity="0.035"/><path d="M1000 557 L60 1078 L90 1078Z" fill="#000" opacity="0.025"/><path d="M1000 557 L220 1078 L250 1078Z" fill="#fff" opacity="0.030"/><path d="M1000 557 L380 1078 L410 1078Z" fill="#000" opacity="0.030"/><path d="M1000 557 L520 1078 L550 1078Z" fill="#fff" opacity="0.025"/><path d="M1000 557 L650 1078 L730 1078Z" fill="#000" opacity="0.040"/><path d="M1000 557 L790 1078 L820 1078Z" fill="#fff" opacity="0.025"/><path d="M1000 557 L900 1078 L930 1078Z" fill="#000" opacity="0.040"/><path d="M1000 557 L1010 1078 L1040 1078Z" fill="#fff" opacity="0.035"/><path d="M1000 557 L1120 1078 L1150 1078Z" fill="#000" opacity="0.030"/><path d="M1000 557 L1230 1078 L1260 1078Z" fill="#fff" opacity="0.035"/><path d="M1000 557 L1560 1078 L1640 1078Z" fill="#000" opacity="0.025"/><path d="M1000 557 L1700 1078 L1745 1078Z" fill="#fff" opacity="0.025"/><path d="M1000 557 L1850 1078 L1895 1078Z" fill="#000" opacity="0.035"/><path d="M1000 557 L2050 1078 L2130 1078Z" fill="#fff" opacity="0.025"/><path d="M1000 557 L2300 1078 L2330 1078Z" fill="#000" opacity="0.035"/><path d="M1000 557 L2600 1078 L2645 1078Z" fill="#fff" opacity="0.025"/><path d="M1000 557 L3000 1078 L3045 1078Z" fill="#000" opacity="0.035"/></g>
 <!-- shadows -->
 <g fill="#2f3a4b" filter="url(#b1)">
  <path d="M0 920 L400 852 L470 840 L560 815 L655 800 L700 830 L640 848 L625 905 L700 910 L640 925 L520 940 L450 960 L380 975 L320 970 L0 1035 V985 L300 945 L330 905 L0 940Z"/>
 </g>
 <!-- skater -->
 <circle cx="850" cy="463" r="31" fill="#a7bbc5"/>
 <path d="M672 520 L690 488 L740 480 L800 505 L828 478 L870 492 L890 520 L908 540 L880 568 L850 582 L825 602 L790 592 L740 577 L690 567 L668 545Z" fill="#c77a52"/>
 <path d="M800 500 L830 478 L870 492 L885 520 L860 540 L820 530Z" fill="#d39068" opacity=".7"/>
 <path d="M712 487 L760 479 L802 520 L792 542 L750 527 L720 506Z" fill="#23252b"/>
 <path d="M668 562 L690 567 L740 577 L790 592 L826 602 L815 640 L800 680 L770 720 L745 752 L713 746 L735 700 L752 660 L745 640 L700 625 L675 600Z" fill="#33302f"/>
 <path d="M690 770 L715 745 L745 752 L775 740 L800 752 L780 775 L760 790 L755 815 L720 820 L685 795Z" fill="#b7ab95"/>
 <path d="M630 845 L700 830 L760 800 L800 760 L812 776 L770 822 L730 857 L700 872 L640 872Z" fill="#4a4a4c"/>
 <circle cx="645" cy="883" r="10" fill="#c58c62"/><circle cx="718" cy="881" r="16" fill="#c58c62"/><circle cx="806" cy="782" r="8" fill="#b98560"/>
 <!-- lens flares -->
 <circle cx="1328" cy="450" r="13" fill="#b59a86" opacity=".45"/>
 <path d="M1365 436 L1390 432 L1392 438 L1367 443Z" fill="#e8c090" opacity=".8"/>
 <circle cx="1110" cy="480" r="9" fill="#6fb07a" opacity=".35"/><circle cx="1178" cy="482" r="6" fill="#c0a080" opacity=".45"/><circle cx="1205" cy="476" r="8" fill="#8ab0b0" opacity=".35"/>
 <path d="M128 610 L140 612 L175 800 L165 800Z" fill="#b9a86a" opacity=".5" filter="url(#b1)"/>
</g>
<rect x="212" y="139" width="91.500" height="173" fill="none" stroke="#ffff00" stroke-width="3"/>
<circle cx="256.500" cy="224.800" r="11" fill="none" stroke="#ffff00" stroke-width="1"/>
<circle cx="256.500" cy="224.800" r="5.500" fill="#ffff00"/>
</svg>

<!--VIEWCTL-->
<div style="left:788px;top:608px;width:699px;height:4px;background:#5fc9f2"></div>
<svg style="left:778px;top:603px" width="12" height="18" viewBox="0 0 12 18"><path d="M0.5 0.5 H11 V17 L0.5 8.500Z" fill="#b8890f" stroke="#e0b416" stroke-width="1"/></svg>
<svg style="left:1486px;top:603px" width="12" height="18" viewBox="0 0 12 18"><path d="M0.5 0.5 H11 V8.500 L0.5 17Z" fill="#b8890f" stroke="#e0b416" stroke-width="1"/></svg>
<svg style="left:836px;top:603px" width="15" height="16" viewBox="0 0 15 16"><defs><linearGradient id="th" x1="0" y1="0" x2="0" y2="1"><stop offset="0" stop-color="#fff"/><stop offset="1" stop-color="#b8b8b8"/></linearGradient></defs><path d="M7.500 0.5 L14 9 V15 H1 V9Z" fill="url(#th)" stroke="#eee" stroke-width=".8"/></svg>
<div style="left:788px;top:650px;width:150px;height:40px;border-radius:5px;background:#1e82e8"></div>
<div class="t" style="left:788px;top:662px;width:150px;text-align:center;font-size:15px;color:#fff">Stop</div>
<svg style="left:954px;top:659px" width="26" height="21" viewBox="0 0 26 21" fill="none" stroke="#5a5a5a" stroke-width="1.2">
 <rect x="1" y="1.500" width="9" height="3.500"/><rect x="16" y="1.500" width="9" height="3.500"/><rect x="1" y="16" width="9" height="3.500"/><rect x="16" y="16" width="9" height="3.500"/>
 <path d="M10 5 V7 M16 5 V7 M10 16 V14 M16 14 V16"/><path d="M4 10.500 H21 M17 7.500 L21.500 10.500 L17 13.500Z" fill="#5a5a5a"/>
</svg>
<div style="left:998px;top:655px;width:1px;height:32px;background:#161616"></div>
<svg style="left:1017px;top:659px" width="20" height="22" viewBox="0 0 20 22" fill="none" stroke="#5a5a5a" stroke-width="1.3"><path d="M1.500 1.500 L18 11 L1.500 20.500Z"/></svg>
<div style="left:1057px;top:662px;width:16px;height:16px;border:1.500px solid #5a5a5a;border-radius:1px"></div>
<svg style="left:1094px;top:660px" width="20" height="20" viewBox="0 0 20 20" fill="none" stroke="#5a5a5a" stroke-width="1.3"><path d="M14.500 1.500 L1.500 10 L14.500 18.500Z M18 1 V19"/></svg>
<svg style="left:1131px;top:660px" width="20" height="20" viewBox="0 0 20 20" fill="none" stroke="#5a5a5a" stroke-width="1.3"><path d="M5.500 1.500 L18.500 10 L5.500 18.500Z M2 1 V19"/></svg>
<svg style="left:1171px;top:660px" width="26" height="20" viewBox="0 0 26 20" fill="none" stroke="#5a5a5a" stroke-width="1.3"><path d="M1.500 2 L12 10 L1.500 18Z M12 2 L24.500 10 L12 18Z"/></svg>
<div style="left:1213px;top:655px;width:1px;height:32px;background:#161616"></div>
<svg style="left:1232px;top:660px" width="28" height="20" viewBox="0 0 28 20" fill="none" stroke="#5a5a5a" stroke-width="1.3"><path d="M1.500 10 V18 H26.500 V10"/><path d="M5.500 1.500 H13.500 V12 L5.500 4.500Z"/></svg>
<svg style="left:1270px;top:660px" width="28" height="20" viewBox="0 0 28 20" fill="none" stroke="#5a5a5a" stroke-width="1.3"><path d="M1.500 10 V18 H26.500 V10"/><path d="M22.500 1.500 H14.500 V12 L22.500 4.500Z"/></svg>
<div style="left:1313px;top:655px;width:1px;height:32px;background:#161616"></div>
<div style="left:1330px;top:657px;width:118px;height:25px;background:#181818;border:1px solid #3e3e3e;border-radius:5px"></div>
<div class="t" style="left:1336px;top:662px;font-size:15.500px;color:#ececec;letter-spacing:1.400px;word-spacing:-2px">00; 00; 01; 23</div>
<svg style="left:1464px;top:658px" width="24" height="20" viewBox="0 0 24 20" fill="none" stroke="#c8c8c8" stroke-width="1.400">
 <path d="M1 5 V1 H5 M19 1 H23 V5 M23 15 V19 H19 M5 19 H1 V15" stroke="#9a9a9a"/>
 <path d="M2.500 10 Q12 0.5 21.500 10 Q12 18.500 2.500 10Z"/><circle cx="12" cy="9.500" r="3.600" fill="#c8c8c8" stroke="none"/><circle cx="12" cy="9.500" r="1.500" fill="#2a2a2a" stroke="none"/>
</svg>

<!--TRACKER-->
<div style="left:1137px;top:709px;width:24px;height:3px;background:repeating-linear-gradient(90deg,#555 0 3px,transparent 3px 5px)"></div>
<div style="left:774px;top:718px;width:747px;height:185px;background:#1d1d1d;border:1px solid #3a3a3a"></div>
<div style="left:775px;top:753px;width:745px;height:3px;background:#0e0e0e"></div>
<div style="left:780px;top:723px;width:188px;height:23px;background:#262626;border:1px solid #343434;border-radius:2px"></div>
<div style="left:809px;top:734px;width:14px;height:1.500px;background:#5a5a5a"></div><div style="left:815.200px;top:727.500px;width:1.500px;height:14px;background:#5a5a5a"></div>
<div class="t" style="left:849px;top:727px;font-size:15px;color:#999">Add a tracker</div>
<div class="t" style="left:979.5px;top:721.500px;font-size:12.500px;letter-spacing:-.3px;color:#b39c14">00;00;00</div>
<div class="t" style="left:1097.0px;top:721.500px;font-size:12.500px;letter-spacing:-.3px;color:#b39c14">00;05;00</div>
<div class="t" style="left:1214.5px;top:721.500px;font-size:12.500px;letter-spacing:-.3px;color:#b39c14">00;10;00</div>
<div class="t" style="left:1332.0px;top:721.500px;font-size:12.500px;letter-spacing:-.3px;color:#b39c14">00;15;00</div>
<div class="t" style="left:1449.5px;top:721.500px;font-size:12.500px;letter-spacing:-.3px;color:#b39c14">00;20;00</div>
<div style="left:977px;top:746px;width:526px;height:1px;background:#c9a414"></div>
<div style="left:977.3px;top:739px;width:1px;height:7px;background:#c9a414"></div>
<div style="left:1000.8px;top:743px;width:1px;height:3px;background:#c9a414"></div>
<div style="left:1024.3px;top:743px;width:1px;height:3px;background:#c9a414"></div>
<div style="left:1047.9px;top:743px;width:1px;height:3px;background:#c9a414"></div>
<div style="left:1071.4px;top:743px;width:1px;height:3px;background:#c9a414"></div>
<div style="left:1094.9px;top:739px;width:1px;height:7px;background:#c9a414"></div>
<div style="left:1118.4px;top:743px;width:1px;height:3px;background:#c9a414"></div>
<div style="left:1141.9px;top:743px;width:1px;height:3px;background:#c9a414"></div>
<div style="left:1165.5px;top:743px;width:1px;height:3px;background:#c9a414"></div>
<div style="left:1189.0px;top:743px;width:1px;height:3px;background:#c9a414"></div>
<div style="left:1212.5px;top:739px;width:1px;height:7px;background:#c9a414"></div>
<div style="left:1236.0px;top:743px;width:1px;height:3px;background:#c9a414"></div>
<div style="left:1259.5px;top:743px;width:1px;height:3px;background:#c9a414"></div>
<div style="left:1283.1px;top:743px;width:1px;height:3px;background:#c9a414"></div>
<div style="left:1306.6px;top:743px;width:1px;height:3px;background:#c9a414"></div>
<div style="left:1330.1px;top:739px;width:1px;height:7px;background:#c9a414"></div>
<div style="left:1353.6px;top:743px;width:1px;height:3px;background:#c9a414"></div>
<div style="left:1377.1px;top:743px;width:1px;height:3px;background:#c9a414"></div>
<div style="left:1400.7px;top:743px;width:1px;height:3px;background:#c9a414"></div>
<div style="left:1424.2px;top:743px;width:1px;height:3px;background:#c9a414"></div>
<div style="left:1447.7px;top:739px;width:1px;height:7px;background:#c9a414"></div>
<div style="left:1471.2px;top:743px;width:1px;height:3px;background:#c9a414"></div>
<div style="left:1494.7px;top:743px;width:1px;height:3px;background:#c9a414"></div>
<div style="left:775px;top:756px;width:202px;height:46px;background:#1a1a1b"></div>
<div style="left:775px;top:802px;width:202px;height:80px;background:#151517"></div>
<div class="t" style="left:802px;top:771px;font-size:16px;color:#e0e0e0">1.</div>
<div style="left:819px;top:767px;width:116px;height:22px;background:#3b3b3d;border:1px solid #58585a"></div>
<div class="t" style="left:830px;top:771px;font-size:14px;color:#4a9ff0">Tracker 1</div>
<svg style="left:945px;top:770px" width="19" height="15" viewBox="0 0 19 15" fill="none" stroke="#bdbdbd" stroke-width="1.2"><path d="M1 7.500 Q9.500 -1.500 18 7.500 Q9.500 16.500 1 7.500Z"/><circle cx="9.500" cy="7.500" r="2.800"/></svg>
<div style="left:977px;top:756px;width:523px;height:46px;background:#547d75;border-top:1px solid #7f9f99;border-bottom:1px solid #8fb0aa"></div>
<div style="left:978px;top:756px;width:41px;height:46px;background:#7ba6a0;border:1px solid #4b746d;border-radius:4px"></div>
<div style="left:977px;top:803px;width:523px;height:79px;background:#555657"></div>
<div style="left:1019px;top:756px;width:1px;height:126px;background:#e41a1a"></div>
<svg style="left:1013px;top:734px" width="15" height="15" viewBox="0 0 15 15"><defs><linearGradient id="ph" x1="0" y1="0" x2="0" y2="1"><stop offset="0" stop-color="#9a9a9a"/><stop offset=".3" stop-color="#fff"/><stop offset="1" stop-color="#fff"/></linearGradient></defs><path d="M0.5 0.5 H14 V4 L7.300 14 L0.5 4Z" fill="url(#ph)"/></svg>
<svg style="left:1505px;top:755px" width="11" height="130" viewBox="0 0 11 130"><path d="M5.500 0 L10.500 10 H0.5Z" fill="#5c5c58"/><rect x="0.5" y="15" width="10" height="98" fill="#333"/><path d="M0.5 119 H10.500 L5.500 129Z" fill="#5c5c58"/></svg>
<div style="left:775px;top:883px;width:745px;height:19px;background:#1f1f1f"></div>
<svg style="left:778px;top:885px" width="190" height="15" viewBox="0 0 190 15"><circle cx="8" cy="7.500" r="6.800" fill="#555"/><path d="M4 7.500 H12" stroke="#222" stroke-width="1.300"/><path d="M32 7.500 H160" stroke="#6a6a6a" stroke-width="1"/><circle cx="32" cy="7.500" r="6" fill="#5a5a5a"/><circle cx="181.500" cy="7.500" r="6.800" fill="#666"/><path d="M177.500 7.500 H185.500 M181.500 3.500 V11.500" stroke="#1f1f1f" stroke-width="1.300"/></svg>
<svg style="left:981px;top:887px" width="10" height="10" viewBox="0 0 10 10"><path d="M10 0 V10 L0 5Z" fill="#5c5c58"/></svg>
<div style="left:997px;top:887px;width:487px;height:10px;background:#2d2d2d"></div>
<svg style="left:1490px;top:887px" width="10" height="10" viewBox="0 0 10 10"><path d="M0 0 V10 L10 5Z" fill="#5c5c58"/></svg>

<div style="left:1212px;top:917px;width:154px;height:28px;background:#383838;border-radius:3px"></div>
<div class="t" style="left:1212px;top:924px;width:154px;text-align:center;color:#d2d2d2;font-size:15px">OK</div>
<div style="left:1372px;top:917px;width:154px;height:28px;background:#383838;border-radius:3px"></div>
<div class="t" style="left:1372px;top:924px;width:154px;text-align:center;color:#d2d2d2;font-size:15px">Cancel</div>

</div>
</body>
</html>
